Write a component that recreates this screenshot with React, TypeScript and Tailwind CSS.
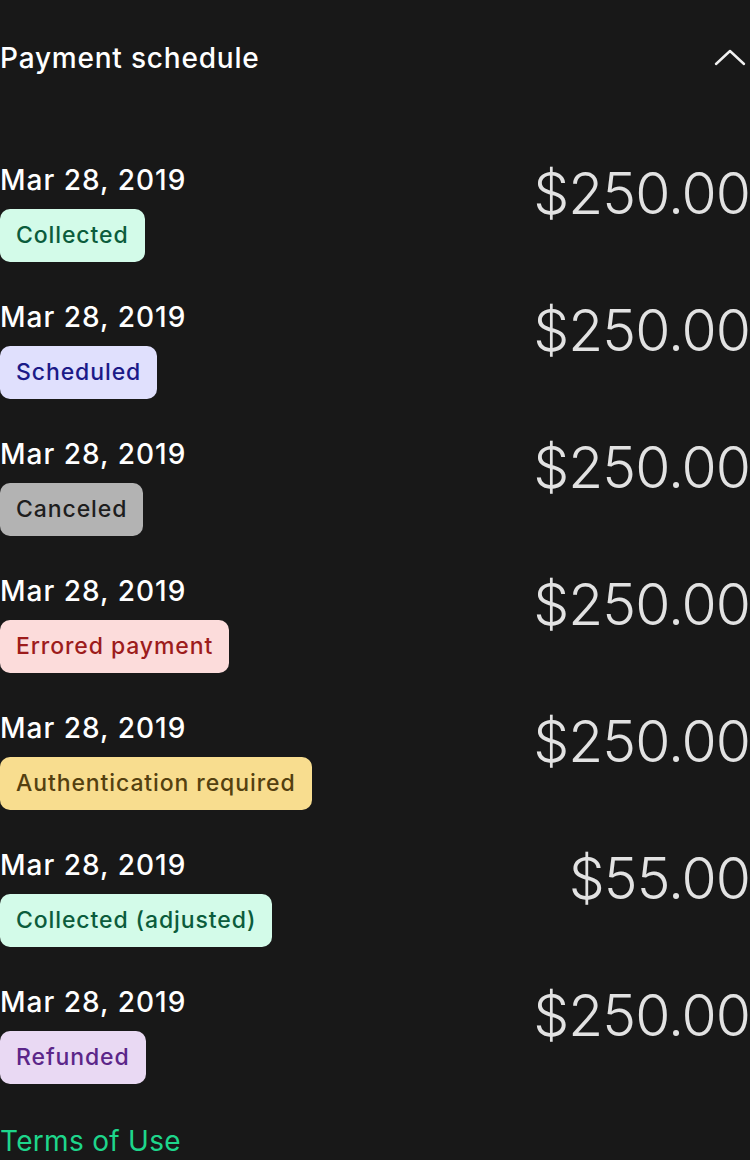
import React from 'react'

type Status = 'collected' | 'scheduled' | 'canceled' | 'errored' | 'auth' | 'adjusted' | 'refunded'

interface Payment {
  date: string
  amount: string
  status: Status
}

const payments: Payment[] = [
  { date: 'Mar 28, 2019', amount: '$250.00', status: 'collected' },
  { date: 'Mar 28, 2019', amount: '$250.00', status: 'scheduled' },
  { date: 'Mar 28, 2019', amount: '$250.00', status: 'canceled' },
  { date: 'Mar 28, 2019', amount: '$250.00', status: 'errored' },
  { date: 'Mar 28, 2019', amount: '$250.00', status: 'auth' },
  { date: 'Mar 28, 2019', amount: '$55.00', status: 'adjusted' },
  { date: 'Mar 28, 2019', amount: '$250.00', status: 'refunded' }
]

const badgeStyles: Record<Status, { label: string; className: string }> = {
  collected: { label: 'Collected', className: 'bg-[#d3fbe9] text-[#0b5c3c]' },
  scheduled: { label: 'Scheduled', className: 'bg-[#e0e0fd] text-[#1b1a88]' },
  canceled: { label: 'Canceled', className: 'bg-[#b3b3b3] text-[#1e1e1e]' },
  errored: { label: 'Errored payment', className: 'bg-[#fcdcdb] text-[#9d1c1c]' },
  auth: { label: 'Authentication required', className: 'bg-[#f8dd8f] text-[#54400f]' },
  adjusted: { label: 'Collected (adjusted)', className: 'bg-[#d3fbe9] text-[#0b5c3c]' },
  refunded: { label: 'Refunded', className: 'bg-[#e9d9f3] text-[#5b2689]' }
}

function StatusBadge({ status }: { status: Status }) {
  const badge = badgeStyles[status]
  return (
    <span
      className={`inline-flex h-[53px] items-center rounded-[10px] px-4 text-[23px] font-medium tracking-[0.9px] ${badge.className}`}
    >
      {badge.label}
    </span>
  )
}

function PaymentRow({ payment }: { payment: Payment }) {
  return (
    <div className="flex items-start justify-between h-[137px]">
      <div className="flex flex-col items-start gap-3">
        <div className="text-[28px] leading-[34px] font-medium tracking-[1px] text-white">{payment.date}</div>
        <StatusBadge status={payment.status} />
      </div>
      <div className="text-[57px] leading-[64px] font-light tracking-[-1px] text-[#e2e2e2] -mt-[1px]">
        {payment.amount}
      </div>
    </div>
  )
}

export default function App() {
  return (
    <div
      className="min-h-[1160px] w-[750px] bg-[#181818] overflow-hidden"
      style={{ fontFamily: 'Inter, "Noto Sans", sans-serif' }}
    >
      <div className="flex items-center justify-between pt-[40px] h-[76px]">
        <h2 className="text-[28px] leading-[36px] font-medium tracking-[0.8px] text-white">Payment schedule</h2>
        <svg width="32" height="18" viewBox="0 0 32 18" className="mr-[4px]" fill="none">
          <path d="M2 15 L16 2 L30 15" stroke="#f0f0f0" strokeWidth="2.4" strokeLinecap="round" strokeLinejoin="round" />
        </svg>
      </div>

      <div className="mt-[87px]">
        {payments.map((p, i) => (
          <PaymentRow key={i} payment={p} />
        ))}
      </div>

      <a href="#" className="block mt-[2px] text-[28px] leading-[34px] tracking-[0.3px] text-[#1ed68b]">
        Terms of Use
      </a>
    </div>
  )
}
